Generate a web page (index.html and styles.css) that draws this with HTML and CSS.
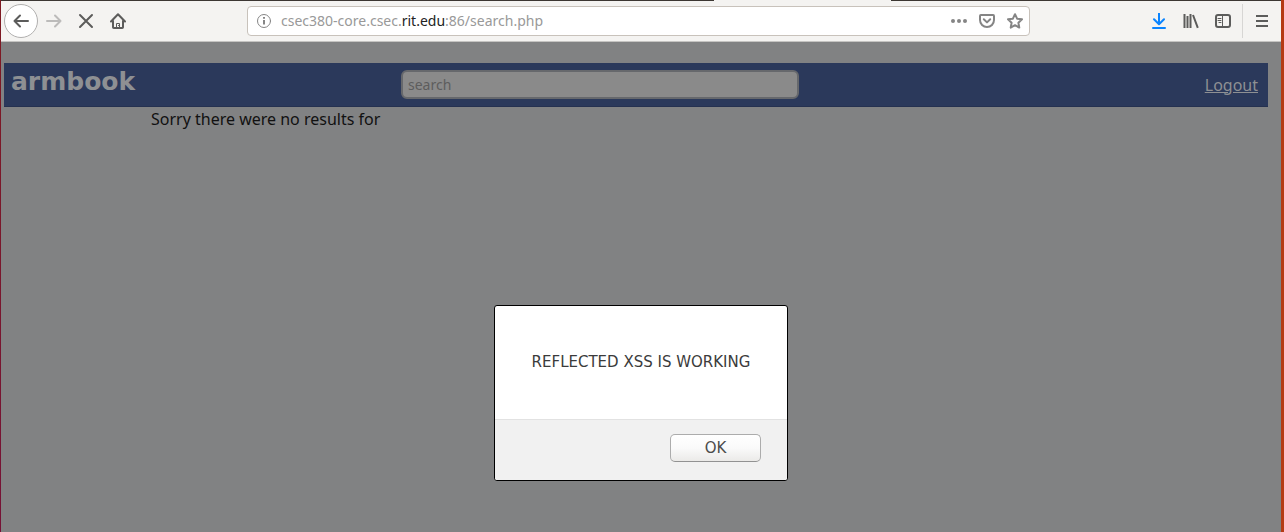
FILE: index.html
```html
<!DOCTYPE html>
<html lang="en">
<head>
<meta charset="utf-8">
<title>armbook</title>
<link rel="stylesheet" href="styles.css">
</head>
<body>
<div class="window">
  <header class="chrome">
    <div class="tab-edge"><span class="tab-gap"></span></div>
    <div class="toolbar">
      <button class="tool back" aria-label="Back"><svg viewBox="0 0 16 16"><path d="M15 8H1.500M7 2.500 1.500 8 7 13.500"/></svg></button>
      <button class="tool forward" aria-label="Forward" disabled><svg viewBox="0 0 16 16"><path d="M1 8h13.500M9 2.500 14.500 8 9 13.500"/></svg></button>
      <button class="tool" aria-label="Stop"><svg viewBox="0 0 16 16"><path d="M2 2l12 12M14 2 2 14"/></svg></button>
      <button class="tool" aria-label="Home"><svg viewBox="0 0 16 16"><path d="M1 8.500 8 1.300l7 7.200M3 8v6.200q0 .8.800.8h8.400q.8 0 .8-.8V8"/><path class="thin" d="M6.500 15v-4.500h3V15M8.500 12.500h1"/></svg></button>
      <span class="spacer"></span>
      <div class="urlbar">
        <svg class="info" viewBox="0 0 16 16"><circle cx="8" cy="8" r="6.500"/><path class="mark" d="M8 7v4.500M8 4v1.800"/></svg>
        <div class="address">csec380-core.csec.<b>rit.edu</b>:86/search.php</div>
        <button class="action" aria-label="Page actions"><svg viewBox="0 0 16 16"><g class="solid"><circle cx="2" cy="8" r="2"/><circle cx="8" cy="8" r="2"/><circle cx="14" cy="8" r="2"/></g></svg></button>
        <button class="action" aria-label="Save to Pocket"><svg viewBox="0 0 16 16"><path d="M1.900 2h12.200q.9 0 .9.900V7a7 7 0 0 1-14 0V2.900Q1 2 1.900 2zM4.800 6.300 8 9.400l3.200-3.100"/></svg></button>
        <button class="action" aria-label="Bookmark"><svg viewBox="0 0 16 16"><path d="M8 1.200l2.100 4.500 4.900.600-3.600 3.400.9 4.900L8 12.200l-4.300 2.400.9-4.900L1 6.300l4.900-.6z"/></svg></button>
      </div>
      <span class="spacer"></span>
      <button class="tool download" aria-label="Downloads"><svg viewBox="0 0 16 16"><path d="M8 0.500v10.500M3 6.300 8 11.300l5-5M2 15h12"/></svg></button>
      <button class="tool" aria-label="Library"><svg viewBox="0 0 16 16"><path class="books" d="M1.500 1v14M4.500 3v12M7.500 1v14M10 2l4.800 12.800"/></svg></button>
      <button class="tool" aria-label="Sidebar"><svg viewBox="0 0 16 16"><rect x="1" y="2" width="14" height="12" rx="2"/><path class="thin" d="M7.500 2v12M3 5.500h3M3 7.500h3M4 9.500h2"/></svg></button>
      <button class="tool menu" aria-label="Menu"><svg viewBox="0 0 16 16"><path d="M2 3h12M2 8h12M2 13h12"/></svg></button>
    </div>
  </header>
  <main class="page">
    <nav class="navbar">
      <h1 class="brand">armbook</h1>
      <input class="search" type="text" placeholder="search" aria-label="search">
      <a class="logout" href="#">Logout</a>
    </nav>
    <p class="result">Sorry there were no results for</p>
    <div class="dialog" role="alertdialog" aria-labelledby="message">
      <p class="message" id="message">REFLECTED XSS IS WORKING</p>
      <div class="dialog-footer"><button class="ok">OK</button></div>
    </div>
  </main>
</div>
</body>
</html>
```
FILE: styles.css
```css
* { box-sizing: border-box; }
body { margin: 0; font-family: "Noto Sans", "Open Sans", sans-serif; font-size: 16px; }
h1, p { margin: 0; }
button { padding: 0; border: 0; background: none; font: inherit; }

.window {
  display: flex;
  flex-direction: column;
  min-height: 100vh;
  padding: 0 3px 0 1px;
  background: linear-gradient(90deg, transparent 50%, #b53a14 50%), linear-gradient(#7e1a22, #761236);
}
.chrome { background: #f4f3f1; border-bottom: 1px solid #c5c4c2; }
.tab-edge { display: flex; justify-content: center; height: 1px; background: #3c3733; }
.tab-gap { width: 177px; margin-left: 322px; background: #f4f3f1; }

.toolbar { display: flex; align-items: center; height: 40px; padding: 0 3px; }
.tool { display: flex; align-items: center; justify-content: center; width: 32px; height: 34px; color: #5c5c5b; }
.tool svg { width: 16px; height: 16px; }
svg { fill: none; stroke: currentColor; stroke-width: 2; stroke-linecap: round; stroke-linejoin: round; }
.back { width: 34px; border: 1px solid #b1b0af; border-radius: 50%; background: #fff; }
.forward { color: #bcbbba; }
.download { color: #0a84ff; }
.menu { width: 36px; margin-left: 3px; padding-left: 3px; border-left: 1px solid #d7d6d4; }
.menu svg, .books { stroke-linecap: butt; }
.solid { fill: currentColor; stroke: none; }
.thin { stroke-width: 1; }
.spacer { flex: 113; }

.urlbar {
  display: flex;
  flex: 767;
  align-items: center;
  gap: 12px;
  height: 30px;
  padding: 0 6px 0 8px;
  border: 1px solid #c8c2bb;
  border-radius: 4px;
  background: #fff;
  color: #858585;
}
.urlbar svg { display: block; width: 16px; height: 16px; }
.info { stroke-width: 1; }
.info .mark { stroke-width: 2; stroke-linecap: butt; }
.address { flex: 1; margin-left: -3px; font-size: 14px; line-height: 20px; color: #999; }
.address b { font-weight: 400; color: #222; }
.action { color: #858585; }

.page { position: relative; flex: 1; padding: 21px 13px 0 3px; background: #818283; }
.navbar {
  display: grid;
  grid-template-columns: 397px 398px 1fr;
  align-items: center;
  height: 44px;
  border-bottom: 1px solid #253150;
  background: #2b395b;
  color: #8e9093;
}
.brand { align-self: start; padding-left: 7px; font: bold 25px/38px "DejaVu Sans", sans-serif; }
.search {
  height: 29px;
  padding: 0 5px;
  border: 2px solid #66686c;
  border-radius: 6px;
  background: #8a8a8a;
  font: 14px "Noto Sans", sans-serif;
}
.search::placeholder { color: #5d5d5d; opacity: 1; }
.logout { justify-self: end; padding-right: 10px; color: inherit; }
.result { padding: 1px 0 0 147px; line-height: 22px; color: #111; }

.dialog {
  position: absolute;
  top: 263px;
  left: 50%;
  transform: translateX(-50%);
  min-width: 294px;
  border: 1px solid #000;
  border-radius: 3px;
  background: #fff;
  color: #3b3b3b;
  font: 15px/20px "DejaVu Sans", sans-serif;
  overflow: hidden;
}
.message { padding: 46px 36px 47px; text-align: center; white-space: nowrap; }
.dialog-footer { display: flex; justify-content: flex-end; padding: 14px 26px 18px; border-top: 1px solid #e2e2e2; background: #f1f1f1; }
.ok {
  width: 91px;
  height: 28px;
  border: 1px solid #acacac;
  border-bottom-color: #929292;
  border-radius: 5px;
  background: linear-gradient(#fff, #fafafa 50%, #ebeae8);
  color: #4c4c4c;
}
```
